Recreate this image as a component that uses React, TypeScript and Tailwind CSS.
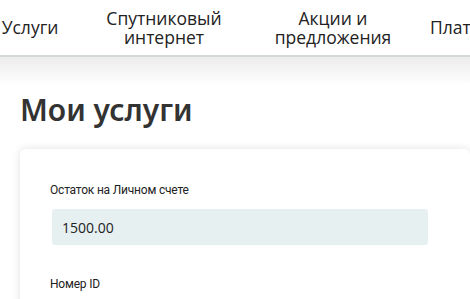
import React from "react";

export default function App() {
  const nav = [
    { t: ["Услуги"], w: "w-[56px]", ml: "ml-[2px]" },
    { t: ["Спутниковый", "интернет"], w: "w-[212px]", ml: "" },
    { t: ["Акции и", "предложения"], w: "w-[126px]", ml: "" },
    { t: ["Платежи"], w: "w-[80px]", ml: "ml-[34px] text-left" },
  ];
  return (
    <div className="w-[470px] h-[299px] overflow-hidden bg-white" style={{ fontFamily: '"Open Sans", sans-serif' }}>
      <div className="h-[57px] flex items-center border-b-2 border-[#d3d9db] bg-white text-[17.5px] leading-[19px] text-[#222] whitespace-nowrap overflow-hidden">
        <div className="flex items-center shrink-0">
          {nav.map((n, i) => (
            <div key={i} className={`${n.w} ${n.ml} shrink-0 text-center flex flex-col items-center`}>
              {n.t.map((l, j) => (
                <div key={j} className={i === 3 ? "self-start" : ""}>{l}</div>
              ))}
            </div>
          ))}
        </div>
      </div>
      <div className="bg-gradient-to-b from-[#ececec] to-white to-[28px] pt-[35px] pl-[20px]">
        <h1 className="text-[30px] leading-[35px] font-semibold text-[#333]" style={{ fontFamily: '"Noto Sans", sans-serif' }}>
          Мои услуги
        </h1>
        <div className="mt-[22px] bg-white rounded-[6px] shadow-[0_0_8px_rgba(0,0,0,0.12)] pl-[30px] pt-[33px] h-[200px]">
          <div className="text-[12px] leading-[16px] text-[#222] tracking-[-0.2px]" style={{ fontFamily: '"Roboto", sans-serif' }}>
            Остаток на Личном счете
          </div>
          <div className="mt-[11px] ml-[2px] w-[376px] h-[36px] bg-[#e6f0f1] rounded-[3px] flex items-center pl-[10px] text-[14px] text-[#222]">
            1500.00
          </div>
          <div className="mt-[31px] text-[12px] leading-[16px] text-[#222] tracking-[-0.2px]" style={{ fontFamily: '"Roboto", sans-serif' }}>
            Номер ID
          </div>
        </div>
      </div>
    </div>
  );
}
